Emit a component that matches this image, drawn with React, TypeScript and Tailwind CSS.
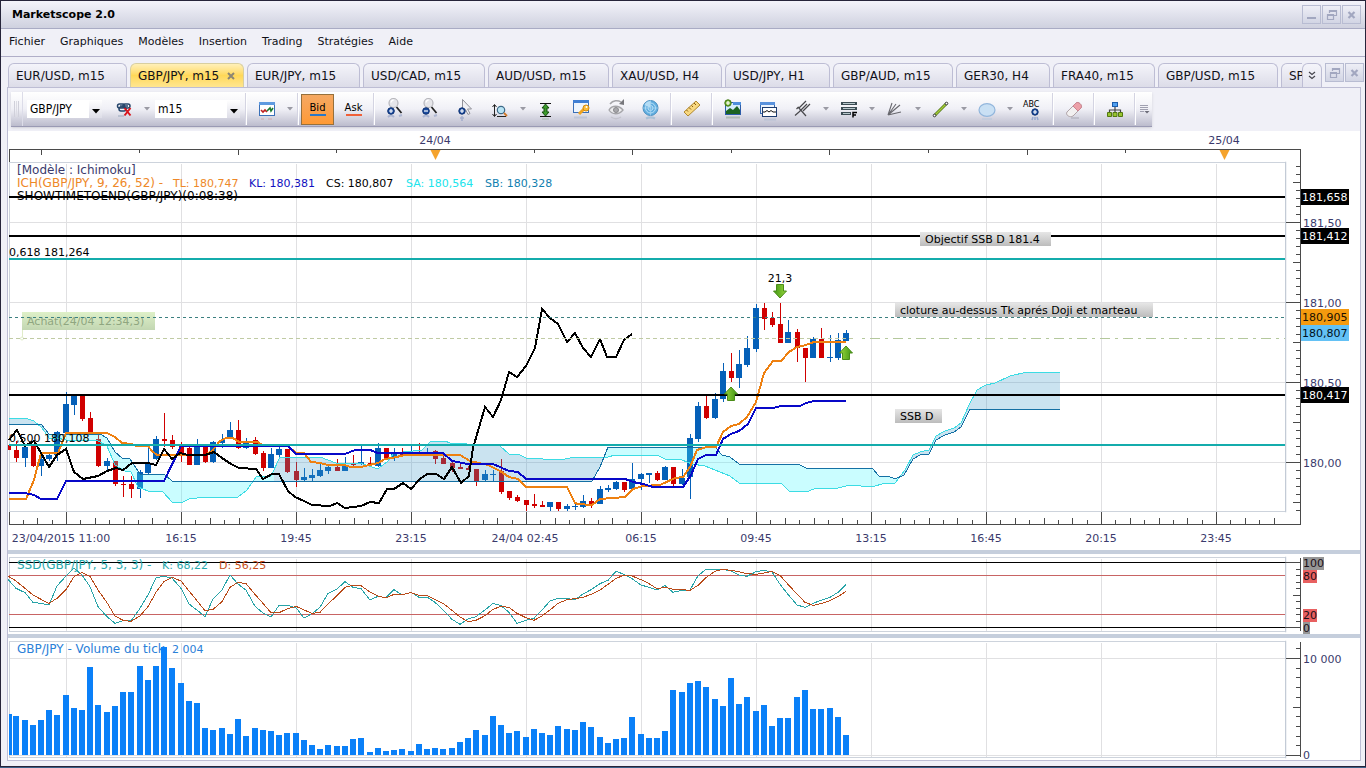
import type { ReactNode } from "react";

const MENU = ["Fichier", "Graphiques", "Modèles", "Insertion", "Trading", "Stratégies", "Aide"];

const TABS = [
  { label: "EUR/USD, m15", width: "w-[119px]" },
  { label: "GBP/JPY, m15", width: "w-[114px]", active: true },
  { label: "EUR/JPY, m15", width: "w-[113px]" },
  { label: "USD/CAD, m15", width: "w-[122px]" },
  { label: "AUD/USD, m15", width: "w-[121px]" },
  { label: "XAU/USD, H4", width: "w-[110px]" },
  { label: "USD/JPY, H1", width: "w-[105px]" },
  { label: "GBP/AUD, m15", width: "w-[120px]" },
  { label: "GER30, H4", width: "w-[94px]" },
  { label: "FRA40, m15", width: "w-[102px]" },
  { label: "GBP/USD, m15", width: "w-[120px]" },
  { label: "SPX500, m15", width: "w-[112px]" },
];

// Candles as [high, body top, body bottom, low, up]
const CANDLES = [
  [445, 446, 450, 450, 0], [441, 450, 458, 462, 0], [447, 447, 458, 467, 1], [446, 446, 466, 467, 0],
  [456, 459, 466, 476, 1], [453, 455, 459, 461, 1], [431, 432, 455, 461, 1], [392, 404, 433, 433, 1],
  [396, 396, 405, 415, 1], [396, 396, 419, 421, 0], [412, 418, 433, 433, 0], [435, 439, 466, 467, 0],
  [458, 461, 466, 470, 1], [461, 461, 484, 486, 0], [476, 484, 485, 497, 0], [476, 484, 489, 498, 0],
  [470, 472, 489, 498, 1], [448, 463, 473, 475, 1], [436, 439, 459, 460, 1], [413, 439, 441, 447, 0],
  [435, 440, 447, 449, 0], [442, 446, 455, 462, 0], [446, 448, 465, 465, 0], [439, 446, 465, 465, 1],
  [447, 447, 462, 463, 0], [441, 442, 462, 463, 1], [434, 440, 443, 448, 1], [422, 430, 438, 438, 1],
  [420, 430, 448, 449, 0], [438, 443, 448, 449, 1], [437, 440, 454, 455, 0], [451, 453, 468, 471, 0],
  [448, 454, 468, 468, 1], [445, 449, 455, 457, 1], [449, 449, 472, 473, 0], [462, 471, 480, 487, 0],
  [468, 477, 480, 481, 1], [469, 475, 478, 481, 1], [463, 470, 476, 477, 1], [465, 467, 471, 474, 1],
  [459, 467, 471, 471, 0], [457, 466, 471, 471, 1], [455, 464, 465, 466, 0], [445, 462, 464, 465, 1],
  [457, 463, 465, 466, 0], [443, 448, 466, 467, 1], [448, 448, 458, 458, 0], [448, 452, 458, 461, 1],
  [448, 453, 456, 457, 0], [445, 453, 455, 456, 1], [443, 453, 455, 456, 0], [448, 452, 454, 455, 1],
  [450, 451, 459, 464, 0], [456, 458, 464, 464, 0], [462, 463, 468, 472, 0], [462, 467, 469, 469, 0],
  [466, 468, 470, 470, 0], [469, 469, 481, 486, 0], [470, 474, 480, 481, 1], [470, 474, 475, 481, 1],
  [459, 471, 492, 494, 0], [491, 491, 498, 500, 0], [495, 497, 501, 502, 0], [500, 500, 505, 511, 0],
  [494, 504, 506, 508, 0], [501, 505, 507, 507, 0], [502, 502, 507, 511, 1], [502, 502, 509, 511, 0],
  [504, 506, 509, 511, 1], [503, 506, 507, 510, 1], [495, 501, 507, 508, 1], [498, 501, 504, 508, 0],
  [486, 489, 504, 504, 1], [485, 488, 490, 492, 1], [481, 482, 489, 490, 1], [482, 482, 490, 492, 0],
  [463, 479, 489, 491, 1], [473, 474, 479, 490, 1], [473, 473, 475, 483, 1], [471, 473, 480, 481, 0],
  [466, 467, 480, 480, 1], [467, 467, 484, 486, 0], [469, 478, 484, 485, 1], [434, 438, 477, 499, 1],
  [402, 406, 439, 442, 1], [395, 406, 418, 419, 0], [393, 399, 418, 419, 1], [363, 371, 399, 402, 1],
  [353, 371, 378, 382, 0], [350, 364, 378, 388, 1], [336, 348, 365, 367, 1], [304, 308, 349, 352, 1],
  [303, 308, 319, 330, 0], [312, 318, 325, 327, 0], [303, 324, 343, 343, 0], [320, 332, 343, 343, 1],
  [329, 332, 348, 362, 0], [348, 348, 358, 382, 0], [337, 339, 358, 358, 1], [328, 339, 358, 358, 0],
  [335, 357, 358, 362, 1], [333, 340, 358, 360, 1], [330, 333, 341, 341, 1],
];

const VOLUMES = [
  41, 39, 35, 30, 35, 45, 40, 60, 47, 45, 88, 50, 43, 49, 63, 63, 89, 75, 89, 108, 87, 72, 54, 52, 27, 25,
  27, 21, 36, 19, 27, 25, 24, 20, 22, 22, 15, 10, 6, 10, 9, 9, 16, 17, 3, 7, 4, 5, 6, 4, 11, 6, 7, 6, 7,
  13, 17, 25, 20, 39, 30, 22, 24, 18, 26, 22, 20, 29, 26, 25, 33, 28, 18, 12, 16, 17, 38, 21, 17, 17, 24,
  65, 63, 72, 74, 68, 56, 49, 77, 51, 58, 44, 50, 29, 37, 37, 58, 65, 46, 46, 47, 38, 20,
];

// Stochastic lines, in thirds of a pixel below the splitter
const SSD_K = [
  103, 130, 143, 172, 175, 180, 123, 93, 69, 90, 125, 185, 215, 235, 227, 228, 190, 150, 98, 94, 99, 130,
  177, 195, 215, 162, 135, 90, 117, 135, 184, 204, 216, 181, 181, 188, 219, 206, 187, 145, 132, 110, 127,
  131, 165, 154, 158, 134, 150, 142, 157, 156, 172, 195, 223, 238, 222, 215, 195, 175, 182, 202, 235, 226,
  220, 195, 168, 160, 160, 165, 147, 134, 116, 106, 79, 88, 101, 120, 127, 135, 122, 142, 136, 135, 92, 73,
  73, 73, 78, 90, 94, 80, 76, 81, 118, 148, 180, 187, 175, 166, 157, 142, 118,
];
const SSD_D = [
  93, 108, 130, 150, 163, 175, 160, 134, 95, 83, 94, 135, 173, 213, 226, 229, 213, 185, 142, 110, 97, 108,
  138, 167, 197, 193, 170, 127, 112, 116, 148, 175, 203, 203, 192, 184, 195, 205, 202, 177, 152, 127, 121,
  122, 141, 153, 159, 148, 149, 143, 151, 152, 164, 175, 196, 216, 230, 226, 212, 193, 184, 187, 205, 218,
  226, 213, 195, 175, 164, 161, 157, 148, 135, 118, 100, 91, 93, 104, 116, 131, 127, 133, 134, 136, 121,
  98, 79, 73, 76, 80, 86, 88, 84, 79, 91, 118, 147, 172, 181, 176, 167, 155, 139,
];

const TENKAN =
  "9,499 26,499 34,480 41,453 58,453 66,433 107,433 115,437 122,443 132,444 136,446 148,446 152,451 157,455 205,455 212,451 220,441 226,438 233,438 239,442 258,442 262,445 288,446 296,453 304,453 311,462 320,463 328,465 345,465 350,467 361,467 378,463 385,459 392,458 405,455 460,455 470,461 488,465 500,471 509,477 518,479 526,487 567,487 575,503 578,504 592,505 600,499 625,497 633,489 643,486 660,485 675,478 683,477 690,467 697,450 707,447 716,447 723,432 731,426 739,424 747,417 756,402 764,373 773,361 781,361 789,352 797,347 806,345 814,342 846,342";
const KIJUN =
  "9,493 25,493 34,495 41,499 57,499 66,481 164,481 181,446 288,446 296,454 345,454 355,450 370,450 378,453 443,453 452,461 468,464 493,464 509,471 518,472 526,479 625,479 633,482 643,484 653,487 683,487 691,475 698,459 706,455 716,455 723,439 731,434 739,431 748,424 756,408 773,408 781,406 800,406 806,403 814,401 846,401";
const CHIKOU =
  "9,440 17,430 25,446 34,441 41,453 49,467 57,455 66,449 74,472 83,479 98,476 107,471 116,468 123,470 132,463 148,463 156,465 164,449 172,459 180,453 188,455 205,455 214,452 222,458 231,464 239,468 256,469 263,479 272,474 279,474 288,491 295,497 304,501 312,505 330,506 337,503 345,508 361,506 370,502 379,503 387,489 394,489 403,483 411,489 420,479 427,474 436,474 444,479 452,467 461,483 469,476 473,448 485,407 493,417 501,400 509,372 517,377 526,366 535,348 542,309 550,318 558,324 567,342 575,333 583,348 591,357 600,339 607,357 616,357 624,340 632,334";
const SPAN_A =
  "9,418 25,418 34,421 42,428 49,438 57,438 66,440 98,441 107,446 115,465 125,471 131,472 138,487 148,491 163,492 172,502 181,503 189,499 205,497 238,497 247,490 256,477 271,476 280,457 320,457 336,463 360,463 375,468 379,468 387,462 394,453 422,450 430,442 445,441 450,443 500,446 509,454 518,454 526,458 560,460 575,457 608,457 615,455 657,455 665,459 682,460 692,464 705,466 715,470 730,476 739,483 781,483 789,491 806,492 814,489 838,488 850,485 872,487 885,483 895,483 905,470 913,455 920,452 929,450 936,436 945,431 954,428 961,423 969,405 977,390 986,385 995,383 1010,376 1027,372 1060,372";
const SPAN_B =
  "9,424 41,424 49,434 100,434 107,438 115,452 122,458 130,459 136,468 140,474 164,474 172,481 592,481 600,467 608,447 715,447 722,455 730,457 739,464 798,464 806,468 872,468 879,476 888,476 895,479 904,475 913,459 920,455 929,454 936,440 945,435 954,432 961,427 970,409 1060,409";
const CLOUD = `${SPAN_A} ${SPAN_B.split(" ").reverse().join(" ")}`;

const TIMES: [number, string][] = [
  [61, "23/04/2015 11:00"],
  [181, "16:15"],
  [296, "19:45"],
  [411, "23:15"],
  [525, "24/04 02:45"],
  [641, "06:15"],
  [756, "09:45"],
  [871, "13:15"],
  [986, "16:45"],
  [1101, "20:15"],
  [1216, "23:45"],
];

const PRICES = [
  { y: 197, label: "181,658", bg: "#000000", fg: "#ffffff" },
  { y: 236, label: "181,412", bg: "#000000", fg: "#ffffff" },
  { y: 317, label: "180,905", bg: "#f59a0e", fg: "#201000" },
  { y: 333, label: "180,807", bg: "#63c1f5", fg: "#001020" },
  { y: 395, label: "180,417", bg: "#000000", fg: "#ffffff" },
];

const GRID_X = Array.from({ length: 24 }, (_, k) => 66 + 115 * k);
const barX = (i: number) => Math.floor(8.6 + i * 8.214);
const range = (n: number) => Array.from({ length: n }, (_, k) => k);

/* ---------- toolbar ---------- */

function Tool({ label, children }: { label: string; children: ReactNode }) {
  return (
    <button type="button" aria-label={label} className="flex h-full w-[35px] shrink-0 items-center justify-center">
      <svg width="24" height="28" viewBox="0 0 24 28" fill="none" aria-hidden="true">
        {children}
      </svg>
    </button>
  );
}

function Arrow() {
  return (
    <span className="flex w-[11px] shrink-0 items-center justify-center">
      <svg width="6" height="4" viewBox="0 0 6 4" aria-hidden="true">
        <path d="M0 0h6L3 3.500z" fill="#9a9aa4" />
      </svg>
    </span>
  );
}

function Separator() {
  return (
    <span className="flex h-full w-[6px] shrink-0 justify-center py-px">
      <span className="w-px bg-[#d4d4e2]" />
      <span className="w-px bg-white" />
    </span>
  );
}

function Picker({ label, value, width }: { label: string; value: string; width: string }) {
  return (
    <label className={`relative h-[18px] shrink-0 bg-white ${width}`}>
      <select
        aria-label={label}
        className="h-full w-full appearance-none bg-transparent pl-[3px] font-['DejaVu_Sans_Condensed','DejaVu_Sans',sans-serif] text-[12px] leading-[14px] text-black outline-none"
      >
        <option>{value}</option>
      </select>
      <span className="pointer-events-none absolute inset-y-0 right-0 flex w-[13px] items-center justify-center bg-gradient-to-b from-white to-[#dedee8]">
        <svg width="8" height="5" viewBox="0 0 8 5" className="mt-1" aria-hidden="true">
          <path d="M0 0h8L4 4.500z" fill="#000" />
        </svg>
      </span>
    </label>
  );
}

function Lens({ minus }: { minus?: boolean }) {
  return (
    <>
      <path d="M13.500 12l5 6" stroke="#222" strokeWidth="1.800" />
      <circle cx="10.500" cy="8" r="4.500" fill="#e6e6ea" stroke="#b4b4ba" strokeWidth="1.200" />
      <path d="M8 7.500a3 3 0 0 1 2.500-2.500" stroke="#fff" strokeWidth="1.500" />
      <circle cx="8" cy="16" r="3.300" fill="#1c4da0" stroke="#0c2f70" />
      <path d={minus ? "M6 16h4" : "M6 16h4M8 14v4"} stroke="#fff" strokeWidth="1.200" />
      <path d="M5 22a4 3.500 0 0 1 6 0M16 21l3-1" stroke="#7d90bd" strokeWidth="2" opacity=".5" />
    </>
  );
}

function Toolbar() {
  return (
    <div className="flex h-[35px] w-fit items-center border-b border-[#9a9ab4] bg-gradient-to-b from-white via-[#f0f0f6] to-[#bcbccd] shadow-sm">
      <span className="mr-1 flex h-full w-3 shrink-0 items-center justify-center gap-px border-r border-[#dcdce8]">
        <span className="h-4 w-px bg-[#d0d0da]" />
        <span className="h-4 w-px bg-[#dcdce4]" />
        <span className="h-4 w-px bg-[#d0d0da]" />
      </span>
      <Picker label="Instrument" value="GBP/JPY" width="w-[75px] mr-1" />
      <Tool label="Lien">
        <g stroke="#26466c" strokeWidth="1.500">
          <rect x="5.500" y="9" width="7" height="4" rx="2" />
          <rect x="11" y="9" width="7" height="4" rx="2" />
          <rect x="7" y="12" width="7" height="4" rx="2" />
          <path d="M8 11h8" />
        </g>
        <path d="M12.500 13l6 7.500M18.500 13l-6 7.500" stroke="#d8141c" strokeWidth="2" />
        <path d="M6 21h6" stroke="#9aa8bc" strokeWidth="2" opacity=".5" />
      </Tool>
      <Arrow />
      <span className="w-[3px]" />
      <Picker label="Période" value="m15" width="w-[85px] mr-[3px]" />
      <Separator />
      <Tool label="Type de graphique">
        <rect x="4.500" y="7.500" width="15" height="13" fill="#fff" stroke="#3a70b8" />
        <path d="M4 7h16v3H4z" fill="#5f9ae0" />
        <path d="M6 15l2 2 2-2 2 2" stroke="#c02020" strokeWidth="1.600" />
        <path d="M12 16l3-3 1 3 2-3" stroke="#1c7a30" strokeWidth="1.600" />
        <path d="M6 24h3M13 24h4" stroke="#d09090" opacity=".6" />
      </Tool>
      <Arrow />
      <Separator />
      <button
        type="button"
        className="mr-[2px] flex h-[31px] w-[33px] shrink-0 flex-col items-center justify-center border border-[#96703c] bg-gradient-to-b from-[#f5a862] to-[#ff9a33] text-[10px] leading-3 text-black"
      >
        Bid
        <span className="h-0.5 w-4 bg-[#2a78c8]" />
      </button>
      <button
        type="button"
        className="flex h-[31px] w-[35px] shrink-0 flex-col items-center justify-center text-[10px] leading-3 text-black"
      >
        Ask
        <span className="h-0.5 w-4 bg-[#f06038]" />
      </button>
      <Separator />
      <Tool label="Zoom avant">
        <Lens />
      </Tool>
      <Tool label="Zoom arrière">
        <Lens minus />
      </Tool>
      <Tool label="Zoom sélection">
        <path d="M9.500 4.500v13l3-3 2.500 5 2-1-2.500-4.500h4z" fill="#f0f0f4" stroke="#92929a" />
        <circle cx="9" cy="16" r="3.200" fill="#1c4da0" stroke="#0c2f70" />
        <path d="M7 16h4M9 14v4" stroke="#fff" strokeWidth="1.200" />
        <path d="M9 21v5M7 23h4" stroke="#7d90bd" strokeWidth="1.500" opacity=".55" />
      </Tool>
      <Tool label="Échelle">
        <path d="M6.500 10v11M4.500 12l2-2.500 2 2.500M4.500 19l2 2.500 2-2.500M9 21.500h9" stroke="#222" />
        <circle cx="13" cy="15" r="3.700" fill="#b9e4f4" stroke="#3d6a88" strokeWidth="1.200" />
        <path d="M16 18l3 3" stroke="#d07828" strokeWidth="1.800" />
      </Tool>
      <Arrow />
      <Tool label="Hauteur">
        <path d="M6 8.500h11M6 21.500h11" stroke="#111" />
        <path d="M11.500 9l3.500 4h-2v4h2l-3.500 4L8 17h2v-4H8z" fill="#3c9a2c" stroke="#14500c" />
        <path d="M8 24h7" stroke="#8ca890" opacity=".6" />
      </Tool>
      <Tool label="Propriétés">
        <rect x="4.500" y="5.500" width="15" height="12" fill="#eef5fd" stroke="#3a70b8" />
        <path d="M4 5h16v3H4z" fill="#3f7fd4" />
        <path d="M10 19l5-5" stroke="#f0a420" strokeWidth="3" />
        <circle cx="17" cy="13" r="3" fill="#fbbc38" stroke="#d48c10" />
        <circle cx="17.500" cy="12" r="1" fill="#fff" />
        <path d="M5 22.500h13" stroke="#a8b8d0" strokeWidth="2" opacity=".5" />
      </Tool>
      <Tool label="Visibilité">
        <path d="M5 15c3-5 10-5 14 0-4 5-11 5-14 0z" fill="#ececee" stroke="#a4a4a8" strokeWidth="1.300" />
        <circle cx="12" cy="15" r="2.500" fill="#a8a8ac" stroke="#88888c" />
        <path d="M6 9c3-4 8-4 11-2" stroke="#a4a4a8" strokeWidth="1.500" />
        <path d="M15 9l5-5v6z" fill="#77777c" />
        <path d="M7 22c3 2 7 2 10 0" stroke="#b8b8c0" strokeWidth="1.500" opacity=".6" />
      </Tool>
      <Tool label="Radar">
        <circle cx="11.500" cy="13" r="7.500" fill="#62aee0" stroke="#4c90c0" />
        <circle cx="11.500" cy="13" r="5" stroke="#b8e0f6" />
        <circle cx="11.500" cy="13" r="2.500" stroke="#b8e0f6" />
        <path d="M11.500 13V6a7 7 0 0 0-6 4z" fill="#b4dcf4" />
        <path d="M11.500 5.500v15M4 13h15" stroke="#a8d4f0" strokeWidth=".7" />
        <path d="M7 23.500c3-1.500 6-1.500 9 0" stroke="#90b4d0" strokeWidth="2" opacity=".6" />
      </Tool>
      <Separator />
      <Tool label="Règle">
        <path d="M4 17L16 6l4 4L8 21z" fill="#f8d880" stroke="#b08830" />
        <path d="M6.500 15l1.500 1.500M9 12.500l2 2M11.500 10.500l1.500 1.500M14 8l2 2" stroke="#8a5c10" />
      </Tool>
      <Separator />
      <Tool label="Image">
        <rect x="4.500" y="7.500" width="15" height="12" fill="#d4ecfa" stroke="#2c5ca8" />
        <path d="M5 19v-3l4-3 3 2 4-4 3 4v4z" fill="#1c6420" />
        <path d="M12 7h8v3h-8z" fill="#4f8fdc" />
        <circle cx="7" cy="8" r="3.200" fill="#74b030" stroke="#3f7812" />
        <path d="M5 8h4M7 6v4" stroke="#fff" strokeWidth="1.200" />
        <path d="M5 22.500h14" stroke="#88a088" strokeWidth="2" opacity=".5" />
      </Tool>
      <Tool label="Fenêtres">
        <rect x="4.500" y="7.500" width="14" height="11" fill="#eef4fc" stroke="#3468b0" />
        <path d="M4 7h15v3H4z" fill="#5a92dc" />
        <rect x="6.500" y="12.500" width="14" height="9" fill="#fff" stroke="#1c3c70" />
        <path d="M7 17l2 0 2-1.500 2 1.500 2-1.500 2 1.500h3" stroke="#111" />
        <path d="M8 24.500h12" stroke="#a8b8d0" strokeWidth="2" opacity=".5" />
      </Tool>
      <Tool label="Fourchette">
        <path d="M4 20.500l4-3.500M7 12l8 9M8 13l7-7M12 16l7-7M7.500 12l-2 2M8 17l8-8" stroke="#48484c" strokeWidth="1.200" />
      </Tool>
      <Arrow />
      <Tool label="Fibonacci">
        <path d="M4 8.500h16M4 13.500h16M4 18.500h10" stroke="#3c4c54" strokeWidth="3" />
        <path d="M6 8.500h12M6 13.500h12M6 18.500h7" stroke="#b8c8cc" />
        <path d="M16 22.500v-5h4M16 20h3" stroke="#000" strokeWidth="1.500" />
      </Tool>
      <Arrow />
      <Tool label="Éventail">
        <path d="M5 20L9 8M5 20L17 10M5 20l13-3M5 20l8-11" stroke="#68686e" strokeWidth="1.100" />
      </Tool>
      <Arrow />
      <Tool label="Ligne">
        <path d="M6 20L17 9" stroke="#527818" strokeWidth="3" />
        <path d="M6 20L17 9" stroke="#a6cc38" strokeWidth="1.500" />
        <circle cx="5.500" cy="20.500" r="1.300" fill="#fff" stroke="#333" />
        <circle cx="17.500" cy="8.500" r="1.300" fill="#fff" stroke="#333" />
      </Tool>
      <Arrow />
      <Tool label="Ellipse">
        <ellipse cx="12" cy="15" rx="8" ry="6.300" fill="#c9e0f4" stroke="#92b6dc" strokeWidth="1.200" />
        <path d="M7 24h10" stroke="#b8c8dc" strokeWidth="2" opacity=".5" />
      </Tool>
      <Arrow />
      <Tool label="Texte">
        <text x="2" y="12" fontSize="8" fill="#000">
          ABC
        </text>
        <circle cx="14" cy="17" r="3.200" fill="#1c4da0" stroke="#0c2f70" />
        <path d="M12 17h4M14 15v4" stroke="#fff" strokeWidth="1.200" />
        <path d="M12 22l-1 3M14 22v3M16 22l1 3" stroke="#6f8cc4" strokeWidth="1.500" opacity=".6" />
      </Tool>
      <Separator />
      <Tool label="Effacer">
        <path d="M5 17l9-9c2-2 7 2 5 5l-8 8c-3 2-8-1-6-4z" fill="#f2f0f0" stroke="#b0a4a8" />
        <path d="M11 11l3-3c2-2 7 2 5 5l-3 3z" fill="#eca0a8" stroke="#cc8490" />
        <path d="M9 23h8" stroke="#a8a8b4" strokeWidth="2" opacity=".5" />
      </Tool>
      <Separator />
      <Tool label="Arborescence">
        <path d="M12 11v4M6.500 18v-3h11v3M12 15v3" stroke="#444" strokeWidth="1.200" />
        <rect x="9.500" y="7.500" width="5" height="4" fill="#50a0f0" stroke="#1c5cac" />
        <path d="M4.500 17.500h4v4h-4zM10 17.500h4v4h-4zM15.500 17.500h4v4h-4z" fill="#98c430" stroke="#527810" />
      </Tool>
      <Separator />
      <button type="button" aria-label="Options" className="flex h-full w-[14px] shrink-0 items-center justify-center">
        <svg width="10" height="10" viewBox="0 0 10 10" fill="none" aria-hidden="true">
          <path d="M0 1.500h8M0 3.500h8M0 5.500h8M0 7.500h4" stroke="#a0a0b0" />
          <path d="M4.500 7h5L7 9.500z" fill="#6c6c78" />
        </svg>
      </button>
    </div>
  );
}

/* ---------- window chrome ---------- */

function WindowButton({ kind }: { kind: "min" | "restore" | "close" }) {
  const names = { min: "Réduire", restore: "Restaurer", close: "Fermer" };
  return (
    <button
      type="button"
      aria-label={names[kind]}
      className="flex h-[19px] w-[19px] shrink-0 items-center justify-center border border-[#b8bcd2] bg-gradient-to-b from-[#eeeef6] to-[#d2d5e4]"
    >
      <svg width="12" height="12" viewBox="0 0 12 12" fill="none" stroke="#a2a7c0" aria-hidden="true">
        {kind === "min" && <path d="M1 9h9" strokeWidth="2" />}
        {kind === "restore" && (
          <path d="M3.500 4V1.500h7v5H8M3.500 2.500h7M1.500 5.500h6v5h-6zM1.500 6.500h6" strokeWidth="1.200" />
        )}
        {kind === "close" && <path d="M2.500 3l6 6M8.500 3l-6 6" strokeWidth="2.200" />}
      </svg>
    </button>
  );
}

function TabStrip() {
  return (
    <div className="flex items-start pt-[6px] pr-px pl-[7px]">
      <div role="tablist" className="flex min-w-0 flex-1 gap-[3px] overflow-hidden">
        {TABS.map((tab) => (
          <button
            key={tab.label}
            type="button"
            role="tab"
            aria-selected={!!tab.active}
            className={`flex h-6 shrink-0 items-center gap-2 rounded-t-md border border-b-0 pl-[7px] text-left text-[12px] whitespace-nowrap ${tab.width} ${
              tab.active
                ? "border-[#d8cfa0] bg-gradient-to-b from-[#fff0b8] via-[#ffd858] to-[#ffe690]"
                : "border-[#bdbdd4] bg-gradient-to-b from-[#f4f4fa] to-[#dcdce8]"
            }`}
          >
            {tab.label}
            {tab.active && (
              <svg width="9" height="8" viewBox="0 0 9 8" aria-hidden="true">
                <path d="M1 1l6 6M7 1L1 7" stroke="#8c8674" strokeWidth="2" />
              </svg>
            )}
          </button>
        ))}
      </div>
      <button
        type="button"
        aria-label="Autres onglets"
        className="flex h-6 w-[20px] items-center justify-center rounded-t-md border border-b-0 border-[#bdbdd4] bg-gradient-to-b from-[#f4f4fa] to-[#e4e4ee]"
      >
        <svg width="8" height="9" viewBox="0 0 8 9" fill="none" stroke="#44444c" aria-hidden="true">
          <path d="M1 1l3 2.500L7 1M1 5l3 2.500L7 5" strokeWidth="1.200" />
        </svg>
      </button>
      <div className="flex gap-px pl-[3px]">
        <WindowButton kind="restore" />
        <WindowButton kind="close" />
      </div>
    </div>
  );
}

/* ---------- charts ---------- */

// A plot that takes the free width, with its scale in a fixed column on the right.
// Both are drawn in window coordinates, shifted back by the panel's origin.
function Panel({
  top,
  height,
  label,
  plot,
  scale,
}: {
  top: number;
  height: string;
  label: string;
  plot: ReactNode;
  scale: ReactNode;
}) {
  return (
    <div className={`flex bg-white ${height}`}>
      <svg className="h-full min-w-0 flex-1 text-[11px]" role="img" aria-label={label}>
        <g transform={`translate(-8 ${-top})`}>{plot}</g>
      </svg>
      <svg className="h-full w-[75px] shrink-0 text-[11px]" aria-hidden="true">
        <g transform={`translate(-1285 ${-top})`}>{scale}</g>
      </svg>
    </div>
  );
}

function Grid({ ys, from, to }: { ys: number[]; from: number; to: number }) {
  return (
    <g stroke="#e0e0e2" shapeRendering="crispEdges">
      {GRID_X.map((x) => (
        <line key={x} x1={x + 0.5} x2={x + 0.5} y1={from} y2={to} />
      ))}
      {ys.map((y) => (
        <line key={y} x1="9" x2="3000" y1={y + 0.5} y2={y + 0.5} />
      ))}
    </g>
  );
}

function FrameLines({ from, to }: { from: number; to: number }) {
  return <path d={`M3000 ${from}.5H9.500V${to}.5H3000`} fill="none" stroke="#cdd3dc" shapeRendering="crispEdges" />;
}

function FrameEnd({ from, to }: { from: number; to: number }) {
  return <path d={`M1285 ${from}.5H1285.500V${to}.5H1285`} fill="none" stroke="#c3cbd6" strokeWidth="1.500" />;
}

function Note({ x, y, width, text }: { x: number; y: number; width: number; text: string }) {
  return (
    <g>
      <rect x={x} y={y} width={width} height="14" fill="url(#note)" />
      <text x={x + 5} y={y + 11} fill="#000">
        {text}
      </text>
    </g>
  );
}

function Signal({ x, y, down }: { x: number; y: number; down?: boolean }) {
  return (
    <path
      d="M0 -7L6.500 0H3.500V6.500H-3.500V0H-6.500Z"
      transform={`translate(${x} ${y})${down ? " rotate(180)" : ""}`}
      fill="url(#signal)"
      stroke="#4a8c18"
    />
  );
}

function PriceChart() {
  return (
    <Panel
      top={131}
      height="h-[419px]"
      label="GBP/JPY m15, Ichimoku"
      plot={
        <>
          <defs>
            <linearGradient id="note" x2="0" y2="1">
              <stop stopColor="#e6e6e6" />
              <stop offset="1" stopColor="#bcbcbc" />
            </linearGradient>
            <linearGradient id="buy" x2="0" y2="1">
              <stop stopColor="#def0c8" />
              <stop offset="1" stopColor="#c2d6b2" />
            </linearGradient>
            <linearGradient id="signal">
              <stop stopColor="#9ad83c" />
              <stop offset="1" stopColor="#3e9414" />
            </linearGradient>
            <clipPath id="cloud-up">
              <path d="M9 400h37v120H9zM274 400h329v120H274zM898 340h200v180H898z" />
            </clipPath>
            <clipPath id="cloud-down">
              <path d="M46 400h228v120H46zM603 400h295v120H603z" />
            </clipPath>
          </defs>
          <Grid ys={[222, 302, 382, 462]} from={164} to={511} />
          <FrameLines from={162} to={511} />

          <g stroke="#4a4a4a" fill="none" shapeRendering="crispEdges">
            <path d="M3000 149.500H9.500V162M3000 524.500H9.500V512" />
            {range(20).map((k) => (
              <path key={k} d={`M${Math.floor(41 + 98.6 * k)}.5 149v${k % 2 ? 4 : 6}`} />
            ))}
            {range(160).map((k) => {
              const x = Math.round(8.5 + 14.375 * k);
              return k > 0 && <path key={k} d={`M${x}.5 524v${k % 8 === 4 ? -12 : k % 2 ? -4 : -6}`} />;
            })}
          </g>
          <g fill="#f5a32c">
            <path d="M430.500 150h10l-5 10z" />
            <path d="M1219.500 150h10l-5 10z" />
          </g>
          <g fill="#3a3a6c" textAnchor="middle">
            <text x="435" y="144">24/04</text>
            <text x="1224" y="144">25/04</text>
            {TIMES.map(([x, label]) => (
              <text key={x} x={x} y="542">
                {label}
              </text>
            ))}
          </g>

          <g shapeRendering="crispEdges">
            {CANDLES.map(([high, top, bottom, low, up], i) => (
              <g key={i} fill={up ? "#0560b8" : "#d00000"}>
                <rect x={barX(i)} y={high} width="1" height={low - high} />
                <rect x={barX(i) - (up ? 3 : 2)} y={top} width={up ? 6 : 5} height={Math.max(1, bottom - top)} />
              </g>
            ))}
          </g>

          <polygon points={CLOUD} fill="#3a96c8" fillOpacity=".27" clipPath="url(#cloud-up)" />
          <polygon points={CLOUD} fill="#40f8ff" fillOpacity=".28" clipPath="url(#cloud-down)" />

          <g fill="none" shapeRendering="crispEdges">
            <polyline points={SPAN_A} stroke="#3cdce4" />
            <polyline points={SPAN_B} stroke="#1470a4" />
            <polyline points={TENKAN} stroke="#ee8010" strokeWidth="2" />
            <polyline points={KIJUN} stroke="#0808c8" strokeWidth="2" />
            <polyline points={CHIKOU} stroke="#000" strokeWidth="2" />
          </g>

          <rect x="22" y="312" width="133" height="18" fill="url(#buy)" />
          <text x="27" y="325" fill="#8fa680">
            Achat(24/04 12:34,3)
          </text>
          <path d="M22.500 330v7" stroke="#e0ecc8" />
          <circle cx="22" cy="338.500" r="1.500" fill="#fff" stroke="#e0ecc8" />

          <g shapeRendering="crispEdges">
            <path d="M9 197H3000M9 236H3000M9 395H3000" stroke="#000" strokeWidth="2" />
            <path d="M9 259H3000M9 445H3000" stroke="#14acac" strokeWidth="2" />
            <path d="M9 317.500H3000" stroke="#3c8080" strokeDasharray="3 3" />
            <path d="M9 338.500H855" stroke="#c0cba4" strokeDasharray="4 3" />
            <path d="M862 338.500H3000" stroke="#b4c89c" strokeDasharray="3 5 10 5" />
          </g>

          <g fontSize="12">
            <text x="17" y="174" fill="#3a3a6c">[Modèle : Ichimoku]</text>
            <text x="17" y="187" fill="#ee8828">ICH(GBP/JPY, 9, 26, 52) -</text>
            <text x="17" y="200">SHOWTIMETOEND(GBP/JPY)(0:08:38)</text>
          </g>
          <text y="187">
            <tspan x="173" fill="#ee8828">TL: 180,747</tspan>
            <tspan x="249" fill="#1010c0">KL: 180,381</tspan>
            <tspan x="326" fill="#000">CS: 180,807</tspan>
            <tspan x="406" fill="#20e4ec">SA: 180,564</tspan>
            <tspan x="485" fill="#1080b0">SB: 180,328</tspan>
          </text>
          <text x="9" y="256">0,618 181,264</text>
          <text x="9" y="442">0,500 180,108</text>

          <Note x={920} y={232} width={131} text="Objectif SSB D 181.4" />
          <Note x={895} y={303} width={258} text="cloture au-dessus Tk aprés Doji et marteau" />
          <Note x={895} y={409} width={47} text="SSB D" />
          <text x="780" y="282" textAnchor="middle">21,3</text>
          <Signal x={780} y={291} down />
          <Signal x={731} y={394} />
          <Signal x={846} y={353} />
        </>
      }
      scale={
        <>
          <FrameEnd from={162} to={511} />
          <g stroke="#4a4a4a" fill="none" shapeRendering="crispEdges">
            <path d="M1285 149.500H1300.500V524.500H1285" />
            {range(44).map((k) => {
              const y = 510 - 8 * k;
              const len = (y - 462) % 80 === 0 ? 14 : (y - 462) % 40 === 0 ? 7 : 4;
              return <path key={k} d={`M1300 ${y}.5h-${len}`} />;
            })}
          </g>
          <g fill="#3a3a6c">
            <text x="1303" y="227">181,50</text>
            <text x="1303" y="307">181,00</text>
            <text x="1303" y="387">180,50</text>
            <text x="1303" y="467">180,00</text>
          </g>
          {PRICES.map((p) => (
            <g key={p.label}>
              <rect x="1301" y={p.y - 8} width="48" height="16" fill={p.bg} />
              <text x="1302" y={p.y + 4} fill={p.fg}>
                {p.label}
              </text>
            </g>
          ))}
        </>
      }
    />
  );
}

function StochasticChart() {
  const line = (values: number[]) => values.map((v, i) => `${barX(i)},${545 + v / 3}`).join(" ");
  return (
    <Panel
      top={554}
      height="h-[80px]"
      label="SSD"
      plot={
        <>
          <Grid ys={[]} from={559} to={631} />
          <FrameLines from={557} to={631} />
          <g shapeRendering="crispEdges" fill="none">
            <path d="M9 562.500H3000M9 627.500H3000" stroke="#000" />
            <path d="M9 575.500H3000M9 614.500H3000" stroke="#c86464" />
            <polyline points={line(SSD_K)} stroke="#28a4a8" />
            <polyline points={line(SSD_D)} stroke="#b84a18" />
          </g>
          <text x="17" y="569" fontSize="12" fill="#28a8ac">SSD(GBP/JPY, 5, 3, 3) -</text>
          <text x="162" y="569" fill="#28a8ac">K: 68,22</text>
          <text x="219" y="569" fill="#c85020">D: 56,25</text>
        </>
      }
      scale={
        <>
          <FrameEnd from={557} to={631} />
          <g stroke="#4a4a4a" fill="none" shapeRendering="crispEdges">
            <path d="M1300.500 558V631" />
            {range(11).map((k) => (
              <path key={k} d={`M1300 ${Math.round(562 + 6.5 * k)}.5h-${k % 10 === 0 ? 15 : k === 5 ? 7 : 4}`} />
            ))}
          </g>
          <rect x="1303" y="557" width="21" height="13" fill="#969696" />
          <rect x="1303" y="570" width="14" height="13" fill="#e86060" />
          <rect x="1303" y="609" width="14" height="13" fill="#e86060" />
          <rect x="1303" y="622" width="7" height="12" fill="#969696" />
          <g fill="#1c1018">
            <text x="1303" y="567">100</text>
            <text x="1303" y="580">80</text>
            <text x="1303" y="619">20</text>
            <text x="1303" y="632">0</text>
          </g>
        </>
      }
    />
  );
}

function VolumeChart() {
  return (
    <Panel
      top={638}
      height="h-[122px]"
      label="Volume du tick"
      plot={
        <>
          <Grid ys={[658, 755]} from={643} to={757} />
          <FrameLines from={641} to={757} />
          <text x="17" y="653" fontSize="12" fill="#2a80d8">GBP/JPY - Volume du tick</text>
          <text x="172" y="653" fill="#2a80d8">2 004</text>
          <g fill="#0a80f8" shapeRendering="crispEdges">
            {VOLUMES.map((h, i) => (
              <rect key={i} x={Math.max(9, barX(i) - 3)} y={755 - h} width={i ? 6 : 3} height={h} />
            ))}
          </g>
        </>
      }
      scale={
        <>
          <FrameEnd from={641} to={757} />
          <g stroke="#4a4a4a" fill="none" shapeRendering="crispEdges">
            <path d="M1300.500 642V757" />
            {range(12).map((k) => (
              <path key={k} d={`M1300 ${Math.round(755 - 9.7 * k)}.5h-${k % 10 === 0 ? 14 : k === 5 ? 7 : 4}`} />
            ))}
          </g>
          <g fill="#3a3a6c">
            <text x="1303" y="663">10 000</text>
            <text x="1303" y="759">0</text>
          </g>
        </>
      }
    />
  );
}

export default function App() {
  return (
    <div className="bg-[#3c6088] pb-px font-['DejaVu_Sans',sans-serif] text-[11px] leading-[14px] text-[#101018]">
      <div className="flex flex-col border border-[#26243a] bg-[#f0f0f7]">
        <header className="flex h-7 items-center justify-between border-b border-[#a9abc4] bg-gradient-to-b from-[#f3f3fa] to-[#cfd1df] pr-1 pl-[11px]">
          <h1 className="font-bold text-black">Marketscope 2.0</h1>
          <div className="flex gap-px">
            <WindowButton kind="min" />
            <WindowButton kind="restore" />
            <WindowButton kind="close" />
          </div>
        </header>

        <nav className="flex h-7 items-center gap-[15px] border-b border-[#b0aec8] pb-px pl-2">
          {MENU.map((item) => (
            <button key={item} type="button">
              {item}
            </button>
          ))}
        </nav>

        <TabStrip />

        <main className="mr-1 mb-[5px] ml-[6px] flex flex-col border border-[#bdbdd4]">
          <div className="overflow-hidden px-[3px] py-1">
            <Toolbar />
          </div>
          <PriceChart />
          <div className="h-1 bg-[#c5cedc]" />
          <StochasticChart />
          <div className="h-1 bg-[#c5cedc]" />
          <VolumeChart />
        </main>
      </div>
    </div>
  );
}
